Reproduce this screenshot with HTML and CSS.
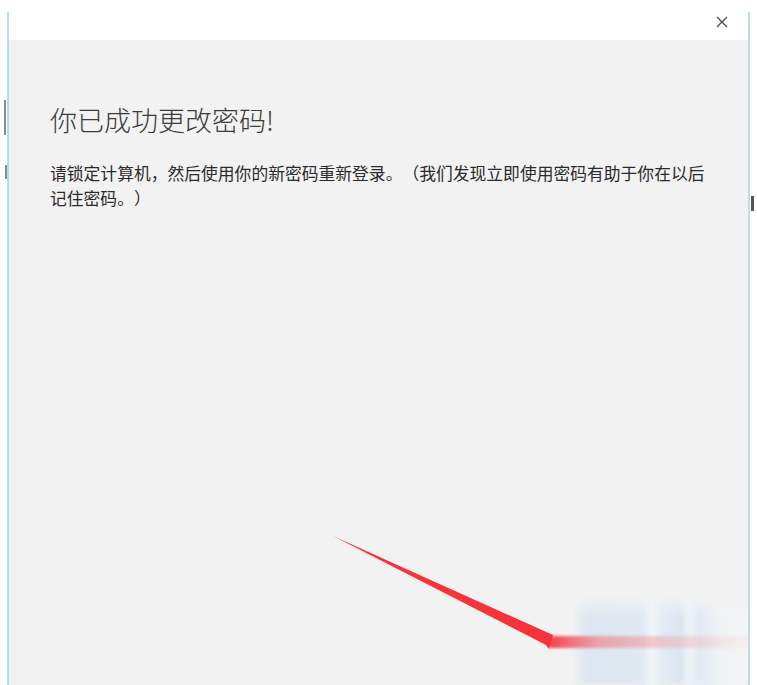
FILE: index.html
```html
<!DOCTYPE html>
<html lang="zh-CN">
<head>
    <meta charset="UTF-8">
    <meta name="viewport" content="width=device-width, initial-scale=1.0">
    <title>更改密码</title>
    <link rel="stylesheet" href="styles.css">
</head>
<body>
    <span class="behind behind-a"></span>
    <span class="behind behind-b"></span>
    <span class="behind behind-c"></span>

    <div class="window">
        <div class="titlebar">
            <button class="close" aria-label="关闭">
                <svg width="12" height="12" viewBox="0 0 12 12">
                    <path d="M1 1 L11 11 M11 1 L1 11" stroke="#4a4a4a" stroke-width="1.3" fill="none"/>
                </svg>
            </button>
        </div>
        <div class="content">
            <h1>你已成功更改密码!</h1>
            <p>请锁定计算机，然后使用你的新密码重新登录。（我们发现立即使用密码有助于你在以后记住密码。）</p>
        </div>
        <div class="blurred-button"></div>
    </div>

    <svg class="annotation" width="757" height="685" viewBox="0 0 757 685">
        <defs>
            <linearGradient id="band" x1="0" x2="1" y1="0" y2="0">
                <stop offset="0" stop-color="#f5323c" stop-opacity="0.95"/>
                <stop offset="0.25" stop-color="#ef7580" stop-opacity="0.6"/>
                <stop offset="0.7" stop-color="#efaab0" stop-opacity="0.4"/>
                <stop offset="1" stop-color="#f4dcdc" stop-opacity="0.25"/>
            </linearGradient>
            <filter id="soft" x="-5%" y="-50%" width="110%" height="200%">
                <feGaussianBlur stdDeviation="1.6"/>
            </filter>
        </defs>
        <rect x="549" y="636" width="199" height="12" fill="url(#band)" filter="url(#soft)"/>
        <polygon points="333,536 553,635 549,649 546,645" fill="#f5333b"/>
    </svg>
</body>
</html>
```

FILE: styles.css
```css
body {
    margin: 0;
    background: #fff;
    font-family: "Microsoft YaHei", "Noto Sans CJK SC", "Noto Sans", sans-serif;
    position: relative;
    height: 685px;
    overflow: hidden;
}
.behind {
    position: absolute;
    background: #8a8a8a;
}
.behind-a {
    left: 4px;
    top: 100px;
    width: 2px;
    height: 35px;
}
.behind-b {
    left: 5px;
    top: 165px;
    width: 2px;
    height: 14px;
}
.behind-c {
    left: 751px;
    top: 196px;
    width: 3px;
    height: 15px;
    background: #555;
}
.window {
    position: relative;
    margin: 12px 0 0 7px;
    width: 739px;
    height: 673px;
    border-left: 2px solid #b2e2e4;
    border-right: 2px solid #b2e2e4;
    display: flex;
    flex-direction: column;
}
.titlebar {
    height: 28px;
    background: #fff;
    display: flex;
    justify-content: flex-end;
    align-items: flex-start;
    padding-right: 14px;
}
.close {
    width: 24px;
    height: 20px;
    border: none;
    background: none;
    padding: 0;
    display: flex;
    align-items: center;
    justify-content: center;
    cursor: pointer;
}
.content {
    flex: 1;
    background: #f2f2f2;
    padding: 63px 27px 0 41px;
}
.content h1 {
    margin: 0;
    font-size: 27px;
    line-height: 34px;
    font-weight: 300;
    color: #3a3a3a;
}
.content p {
    margin: 24px 0 0;
    width: 668px;
    font-size: 16.8px;
    line-height: 25px;
    color: #2a2a2a;
    text-spacing-trim: space-all;
}
.blurred-button {
    position: absolute;
    right: 0;
    bottom: 0;
    width: 175px;
    height: 89px;
    background: linear-gradient(90deg, #eef1f4 0, #dde7f1 8%, #dfe8f1 40%, #f4f7fa 45%, #e4ecf5 50%, #dae5f0 62%, #f0f4f7 66%, #e1e9f2 72%, #f1f3f5 85%, #f4f4f4 100%);
    filter: blur(2.5px);
    -webkit-mask-image: linear-gradient(180deg, transparent 0, #000 22%);
    mask-image: linear-gradient(180deg, transparent 0, #000 22%);
}
.annotation {
    position: absolute;
    left: 0;
    top: 0;
    pointer-events: none;
}
```
